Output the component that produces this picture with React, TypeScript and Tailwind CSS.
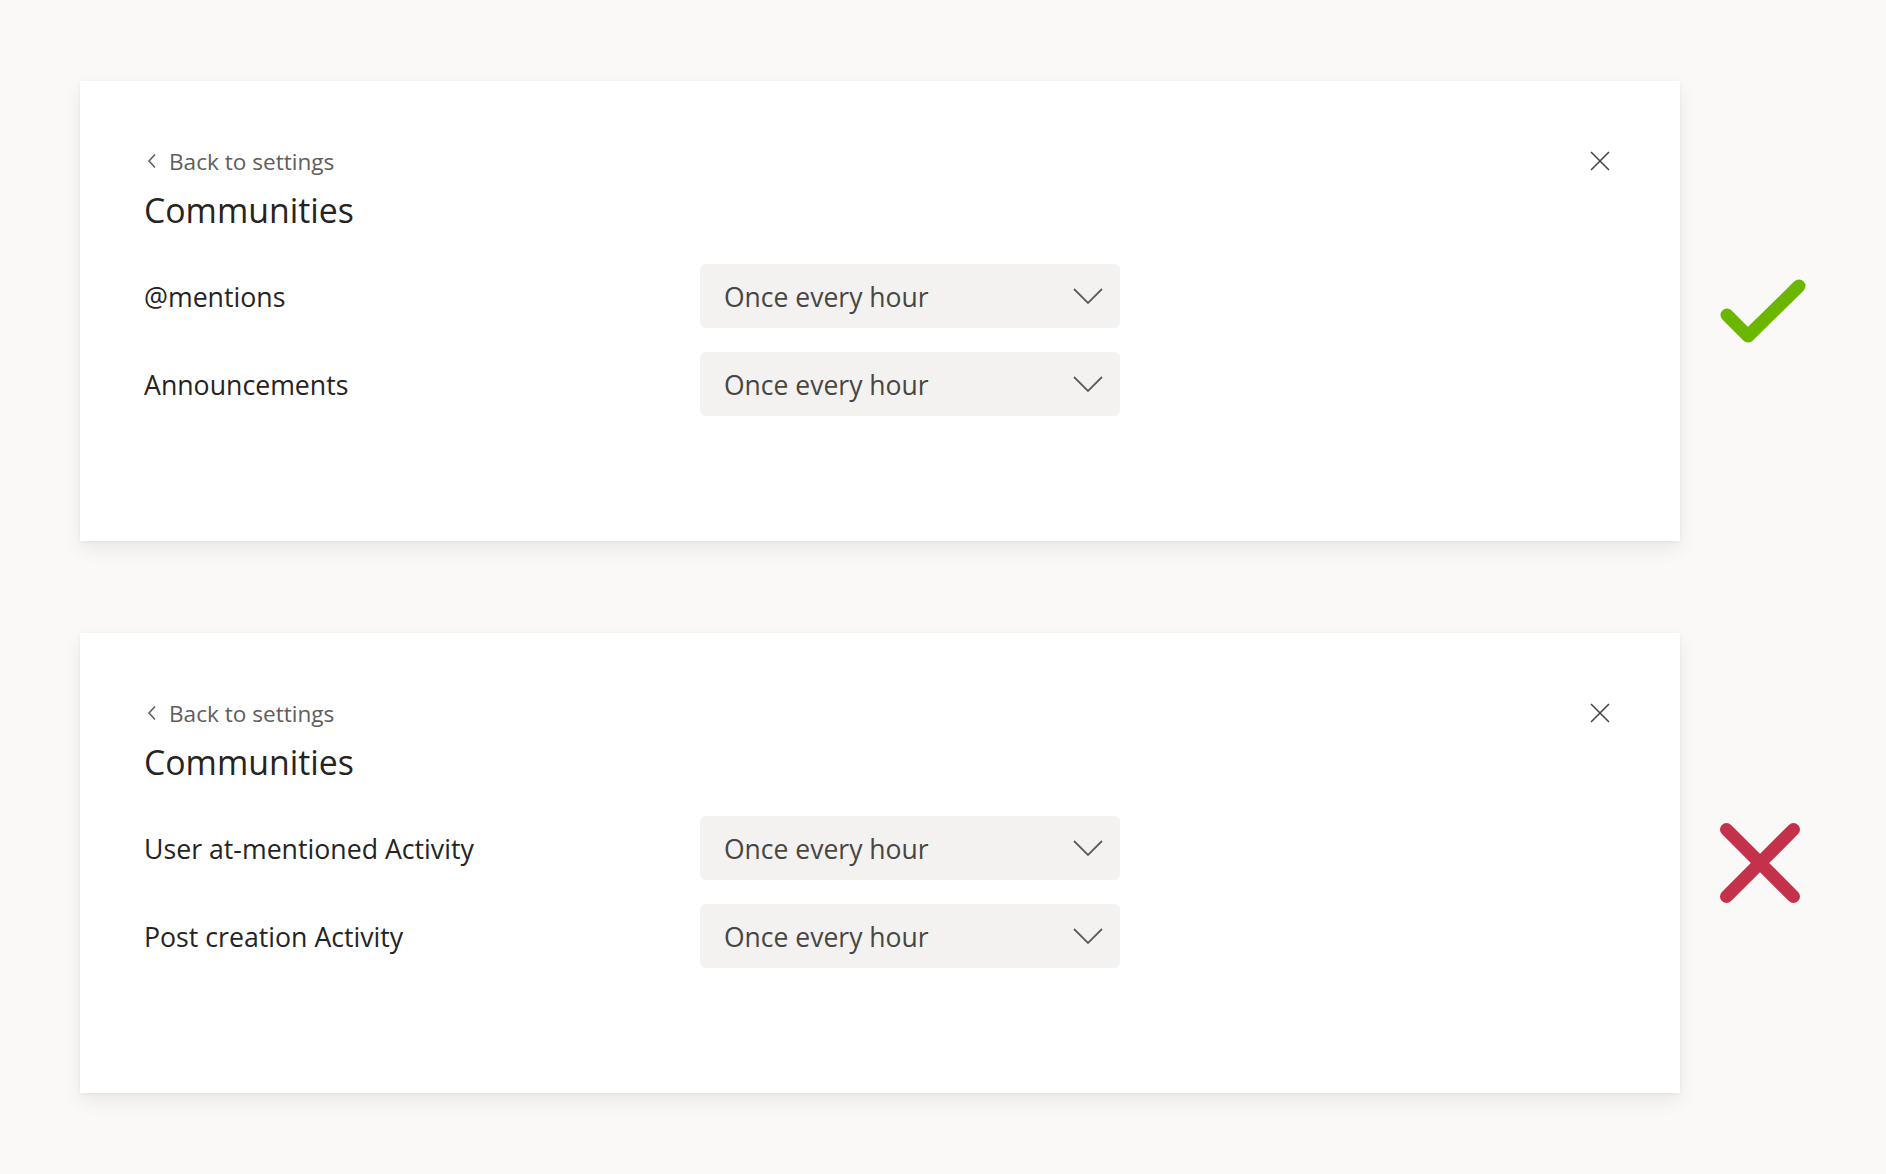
import { ReactNode } from 'react'

type Row = { label: string; value: string }

const good: Row[] = [
  { label: '@mentions', value: 'Once every hour' },
  { label: 'Announcements', value: 'Once every hour' }
]

const bad: Row[] = [
  { label: 'User at-mentioned Activity', value: 'Once every hour' },
  { label: 'Post creation Activity', value: 'Once every hour' }
]

function ChevronDown() {
  return (
    <svg width="32" height="18" viewBox="0 0 32 18" fill="none" className="shrink-0">
      <path d="M2 2 L16 16 L30 2" stroke="#605e5c" strokeWidth="1.8" />
    </svg>
  )
}

function Dropdown({ value }: { value: string }) {
  return (
    <div className="flex h-[64px] w-[420px] items-center justify-between rounded-[6px] bg-[#f3f2f1] pl-[24px] pr-[16px]">
      <span className="pt-[3px] text-[26.5px] text-[#484644]">{value}</span>
      <ChevronDown />
    </div>
  )
}

function SettingsCard({ rows }: { rows: Row[] }) {
  return (
    <div className="h-[460px] w-[1600px] shrink-0 bg-white pl-[64px] pr-[70px] pt-[65px] shadow-[0_8px_18px_rgba(0,0,0,0.07),0_1px_4px_rgba(0,0,0,0.05)]">
      <div className="flex h-[30px] items-center justify-between">
        <div className="flex items-center gap-[12px]">
          <svg width="10" height="16" viewBox="0 0 10 16" fill="none" className="ml-[3px]">
            <path d="M8 1.5 L2 8 L8 14.5" stroke="#605e5c" strokeWidth="1.6" />
          </svg>
          <span className="pt-[2px] text-[22.6px] text-[#605e5c]">Back to settings</span>
        </div>
        <svg width="20" height="20" viewBox="0 0 20 20" fill="none" className="-mt-[1px]">
          <path d="M1 1 L19 19 M19 1 L1 19" stroke="#484644" strokeWidth="1.6" />
        </svg>
      </div>
      <h2 className="mt-[12px] text-[33.8px] leading-[44px] text-[#252423]">Communities</h2>
      <div className="mt-[32px] flex flex-col gap-[24px]">
        {rows.map((r) => (
          <div key={r.label} className="flex items-center">
            <span className="w-[556px] pt-[2px] text-[26.7px] text-[#252423]">{r.label}</span>
            <Dropdown value={r.value} />
          </div>
        ))}
      </div>
    </div>
  )
}

function Verdict({ children }: { children: ReactNode }) {
  return <div className="ml-[36px] flex w-[96px] items-center">{children}</div>
}

export default function App() {
  return (
    <div
      className="min-h-[1174px] bg-[#faf9f8] pl-[80px] pt-[81px]"
      style={{ fontFamily: '"Open Sans", "Noto Sans", sans-serif' }}
    >
      <div className="flex flex-col gap-[92px]">
        <div className="flex items-center">
          <SettingsCard rows={good} />
          <Verdict>
            <svg width="96" height="70" viewBox="0 0 96 70" fill="none">
              <path
                d="M11 39 L32 60 L83 10"
                stroke="#6bb700"
                strokeWidth="13"
                strokeLinecap="round"
                strokeLinejoin="round"
              />
            </svg>
          </Verdict>
        </div>
        <div className="flex items-center">
          <SettingsCard rows={bad} />
          <Verdict>
            <svg width="96" height="96" viewBox="0 0 96 96" fill="none">
              <path
                d="M10.5 14.5 L77.5 81.5 M77.5 14.5 L10.5 81.5"
                stroke="#c4314b"
                strokeWidth="13"
                strokeLinecap="round"
              />
            </svg>
          </Verdict>
        </div>
      </div>
    </div>
  )
}
